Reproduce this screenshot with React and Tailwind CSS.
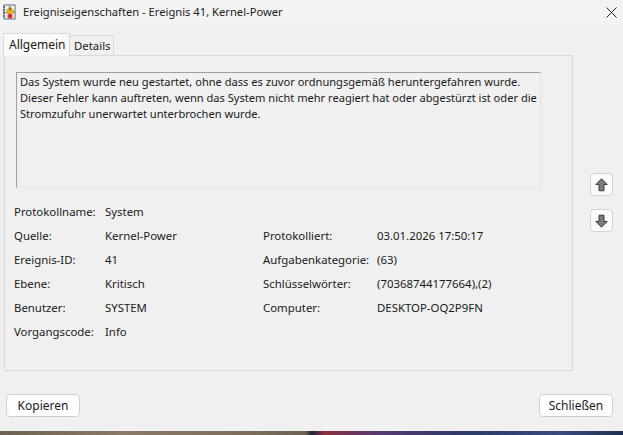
import React from "react";

const font = { fontFamily: '"Noto Sans", "Open Sans", Arial, sans-serif' };

function ArrowButton({ down }) {
  return (
    <button className="w-[23px] h-[23px] rounded-[4px] border border-[#d2d2d2] bg-[#fbfbfb] flex items-center justify-center">
      <svg width="13" height="14" viewBox="0 0 13 14" className={down ? "rotate-180" : ""}>
        <polygon
          points="6.5,0.8 12.2,6.5 9,6.5 9,12.8 4,12.8 4,6.5 0.8,6.5"
          fill="#7c7c7c"
          stroke="#3f3f3f"
          strokeWidth="1"
          strokeLinejoin="round"
        />
      </svg>
    </button>
  );
}

function TitleIcon() {
  return (
    <svg width="14" height="16" viewBox="0 0 14 16">
      <rect x="2" y="1" width="11" height="14" fill="#eef2f8" stroke="#5a6b8c" />
      <line x1="1" y1="3" x2="3" y2="3" stroke="#333" />
      <line x1="1" y1="6" x2="3" y2="6" stroke="#333" />
      <line x1="1" y1="9" x2="3" y2="9" stroke="#333" />
      <line x1="1" y1="12" x2="3" y2="12" stroke="#333" />
      <polygon points="8,2 12.5,9 3.5,9" fill="#f2c511" stroke="#a47c00" strokeWidth="0.7" />
      <rect x="7.6" y="4" width="0.9" height="3" fill="#222" />
      <circle cx="8" cy="12" r="2.6" fill="#d9352c" />
    </svg>
  );
}

export default function App() {
  const rows = [
    ["Protokollname:", "System", "", ""],
    ["Quelle:", "Kernel-Power", "Protokolliert:", "03.01.2026 17:50:17"],
    ["Ereignis-ID:", "41", "Aufgabenkategorie:", "(63)"],
    ["Ebene:", "Kritisch", "Schlüsselwörter:", "(70368744177664),(2)"],
    ["Benutzer:", "SYSTEM", "Computer:", "DESKTOP-OQ2P9FN"],
    ["Vorgangscode:", "Info", "", ""],
  ];

  return (
    <div className="w-[623px] h-[435px] flex flex-col bg-[#f0f0f0] text-[11.4px] text-[#1a1a1a] overflow-hidden" style={font}>
      {/* title bar */}
      <div className="h-[24px] flex items-center bg-[#f3f3f3] shrink-0">
        <div className="pl-[2px] pr-[7px] flex items-center">
          <TitleIcon />
        </div>
        <span className="text-[11.2px] text-[#1b1b1b]">Ereigniseigenschaften - Ereignis 41, Kernel-Power</span>
        <div className="ml-auto pr-[6px] flex items-center">
          <svg width="11" height="11" viewBox="0 0 11 11">
            <path d="M0.5 0.5 L10.5 10.5 M10.5 0.5 L0.5 10.5" stroke="#222" strokeWidth="1" />
          </svg>
        </div>
      </div>

      <div className="flex flex-1 min-h-0">
        {/* tabs + panel */}
        <div className="w-[573px] pl-[3px] pt-[9px] flex flex-col">
          <div className="flex items-end h-[23px]">
            <div className="h-[23px] w-[67px] px-[5px] bg-[#f9f9f9] border border-b-0 border-[#dadada] flex items-center text-[12px] relative z-10">
              Allgemein
            </div>
            <div className="h-[21px] w-[44px] px-[4px] border border-l-0 border-b-0 border-[#dadada] flex items-center">
              Details
            </div>
          </div>
          <div className="ml-[1px] h-[316px] border border-[#dadada] -mt-[1px] px-[11px] pt-[16px]">
            <div className="w-[525px] h-[116px] border border-t-[#a0a0a0] border-l-[#a0a0a0] border-r-[#e3e3e3] border-b-[#e3e3e3] bg-[#f0f0f0] pl-[3px] pt-[1px] text-[11.1px] leading-[16px] whitespace-nowrap">
              <div>Das System wurde neu gestartet, ohne dass es zuvor ordnungsgemäß heruntergefahren wurde.</div>
              <div>Dieser Fehler kann auftreten, wenn das System nicht mehr reagiert hat oder abgestürzt ist oder die</div>
              <div>Stromzufuhr unerwartet unterbrochen wurde.</div>
            </div>
            <div className="grid grid-cols-[91px_158px_114px_1fr] mt-[12px] -ml-[2px]">
              {rows.map((r, i) => (
                <React.Fragment key={i}>
                  <div className="h-[24px] flex items-center whitespace-nowrap">{r[0]}</div>
                  <div className="h-[24px] flex items-center whitespace-nowrap">{r[1]}</div>
                  <div className="h-[24px] flex items-center whitespace-nowrap">{r[2]}</div>
                  <div className="h-[24px] flex items-center whitespace-nowrap">{r[3]}</div>
                </React.Fragment>
              ))}
            </div>
          </div>
        </div>
        {/* nav arrows */}
        <div className="flex-1 flex flex-col items-end pr-[10px] pt-[149px] gap-[13px]">
          <ArrowButton />
          <ArrowButton down />
        </div>
      </div>

      {/* bottom buttons */}
      <div className="h-[60px] shrink-0 flex items-start justify-between px-[6px] pt-[23px]">
        <button className="w-[74px] h-[23px] rounded-[4px] border border-[#cfcfcf] bg-[#fdfdfd] text-[12px]">Kopieren</button>
        <button className="w-[74px] h-[23px] mr-[4px] rounded-[4px] border border-[#cfcfcf] bg-[#fdfdfd] text-[12px]">Schließen</button>
      </div>

      {/* wallpaper strip */}
      <div className="h-[4px] shrink-0 bg-[linear-gradient(90deg,#6f6252_0%,#8a7a66_20%,#7c6d5c_40%,#6e6252_49%,#1e2438_50%,#8a3040_52%,#5a3a70_60%,#2c3a6a_75%,#3a4a80_90%,#203050_100%)]" />
    </div>
  );
}
